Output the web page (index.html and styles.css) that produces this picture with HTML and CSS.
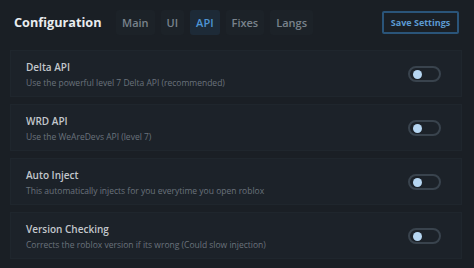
FILE: index.html
```html
<!DOCTYPE html>
<html lang="en">
<head>
    <meta charset="UTF-8">
    <meta name="viewport" content="width=device-width, initial-scale=1.0">
    <title>Configuration</title>
    <link rel="stylesheet" href="styles.css">
</head>
<body>
    <header class="topbar">
        <h1>Configuration</h1>
        <nav class="tabs">
            <a class="tab">Main</a>
            <a class="tab">UI</a>
            <a class="tab active">API</a>
            <a class="tab">Fixes</a>
            <a class="tab">Langs</a>
        </nav>
        <button class="save">Save Settings</button>
    </header>
    <div class="list">
        <div class="card">
            <div class="info">
                <h2>Delta API</h2>
                <p>Use the powerful level 7 Delta API (recommended)</p>
            </div>
            <span class="toggle"></span>
        </div>
        <div class="card">
            <div class="info">
                <h2>WRD API</h2>
                <p>Use the WeAreDevs API (level 7)</p>
            </div>
            <span class="toggle"></span>
        </div>
        <div class="card">
            <div class="info">
                <h2>Auto Inject</h2>
                <p>This automatically injects for you everytime you open roblox</p>
            </div>
            <span class="toggle"></span>
        </div>
        <div class="card">
            <div class="info">
                <h2>Version Checking</h2>
                <p>Corrects the roblox version if its wrong (Could slow injection)</p>
            </div>
            <span class="toggle"></span>
        </div>
    </div>
</body>
</html>
```
FILE: styles.css
```css
body {
    font-family: "Open Sans", "Liberation Sans", sans-serif;
    background-color: #1a1f25;
    margin: 0;
    padding: 0;
    width: 474px;
    height: 268px;
    overflow: hidden;
}
.topbar {
    display: flex;
    align-items: center;
    height: 44px;
    padding: 0 15px 0 14px;
}
.topbar h1 {
    margin: 0;
    font-size: 12.7px;
    font-weight: 700;
    color: #e9ecef;
    width: 102px;
}
.tabs {
    display: flex;
    gap: 6px;
    flex: 1;
}
.tab {
    font-size: 11px;
    font-weight: 600;
    color: #79828c;
    padding: 5px 6px;
    border-radius: 3px;
    background-color: #1c2228;
}
.tab.active {
    color: #4e94d4;
    background-color: #1d2a37;
}
.save {
    font-family: inherit;
    font-size: 9px;
    font-weight: 700;
    color: #5c9ad2;
    background: transparent;
    border: 2px solid #2a5479;
    border-radius: 2px;
    width: 77px;
    height: 23px;
    padding: 0;
}
.list {
    display: flex;
    flex-direction: column;
    gap: 7px;
    padding: 6px 12px 0 10px;
}
.card {
    display: flex;
    align-items: center;
    justify-content: space-between;
    height: 47px;
    padding: 0 20px 0 15px;
    background-color: #1c2229;
    border: 1px solid #1f262d;
    box-sizing: border-box;
}
.info h2 {
    margin: 0 0 3px;
    font-size: 10px;
    font-weight: 600;
    color: #c3c7cc;
}
.info p {
    margin: 0;
    font-size: 8.5px;
    color: #6a727c;
}
.toggle {
    position: relative;
    width: 33px;
    height: 16px;
    border: 2px solid #39434d;
    border-radius: 10px;
    box-sizing: border-box;
}
.toggle::after {
    content: "";
    position: absolute;
    left: 3px;
    top: 2px;
    width: 9px;
    height: 9px;
    border-radius: 50%;
    background-color: #b6d6f2;
}
```
